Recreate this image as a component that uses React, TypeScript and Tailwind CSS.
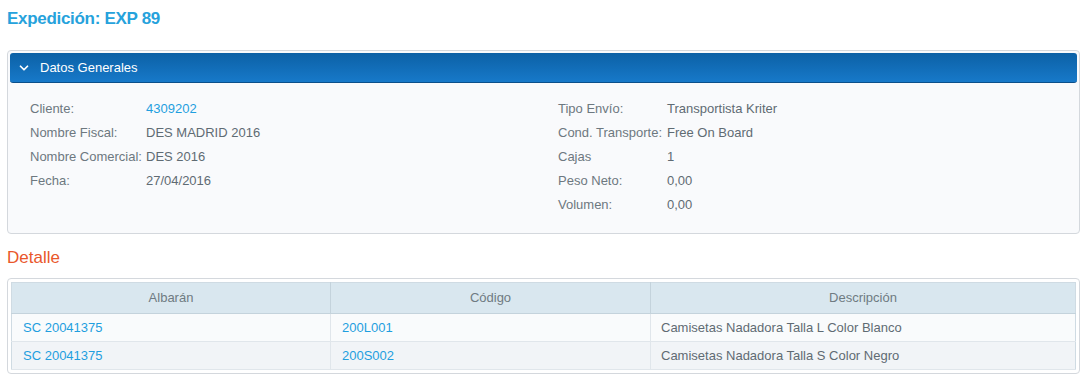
import { ChevronDown } from 'lucide-react'

const general = [
  { label: 'Cliente:', value: '4309202', link: true },
  { label: 'Nombre Fiscal:', value: 'DES MADRID 2016' },
  { label: 'Nombre Comercial:', value: 'DES 2016' },
  { label: 'Fecha:', value: '27/04/2016' },
]

const transport = [
  { label: 'Tipo Envío:', value: 'Transportista Kriter' },
  { label: 'Cond. Transporte:', value: 'Free On Board' },
  { label: 'Cajas', value: '1' },
  { label: 'Peso Neto:', value: '0,00' },
  { label: 'Volumen:', value: '0,00' },
]

const lines = [
  { albaran: 'SC 20041375', codigo: '200L001', desc: 'Camisetas Nadadora Talla L Color Blanco' },
  { albaran: 'SC 20041375', codigo: '200S002', desc: 'Camisetas Nadadora Talla S Color Negro' },
]

type Field = { label: string; value: string; link?: boolean }

const FieldList = ({ items, labelWidth }: { items: Field[]; labelWidth: string }) => (
  <div className="flex flex-col">
    {items.map((f) => (
      <div key={f.label} className="flex h-6 items-center">
        <span className={`${labelWidth} shrink-0 text-[#6d7880]`}>{f.label}</span>
        <span className={f.link ? 'text-[#1f9fdf]' : 'text-[#5f6b73]'}>{f.value}</span>
      </div>
    ))}
  </div>
)

export default function App() {
  return (
    <div className="min-h-[378px] bg-white pl-[7px] pr-[4px] pt-[7px] text-[13px] font-['Liberation_Sans',sans-serif]">
      <h1 className="text-[17px] font-bold leading-6 tracking-[-0.3px] text-[#26a2dc]">Expedición: EXP 89</h1>

      <section className="mt-[19px] rounded-[4px] border border-[#d4d8dd] bg-[#f9fafc] p-[2px]">
        <div className="flex h-[30px] items-center gap-[9px] rounded-[3px] border-b border-[#0b4f8a] bg-gradient-to-b from-[#0c61a6] to-[#1779c9] pl-[7px] text-white">
          <ChevronDown size={14} strokeWidth={3} />
          <span>Datos Generales</span>
        </div>
        <div className="flex pt-[14px] pb-[14px] pl-[20px]">
          <div className="w-[528px]">
            <FieldList items={general} labelWidth="w-[116px]" />
          </div>
          <FieldList items={transport} labelWidth="w-[109px]" />
        </div>
      </section>

      <h2 className="mt-[12px] text-[17px] leading-6 text-[#e9572b]">Detalle</h2>

      <section className="mt-[8px] rounded-[4px] border border-[#d4d8dd] bg-white p-[3px]">
        <table className="w-full border-collapse border border-[#cfdbe3]">
          <thead>
            <tr className="h-[31px] bg-[#d9e7ef] text-[#6f7b82]">
              <th className="w-[319px] border-r border-b border-[#c4d3dc] font-normal">Albarán</th>
              <th className="w-[320px] border-r border-b border-[#c4d3dc] font-normal">Código</th>
              <th className="border-b border-[#c4d3dc] font-normal">Descripción</th>
            </tr>
          </thead>
          <tbody>
            {lines.map((l, i) => (
              <tr key={l.codigo} className={i % 2 === 0 ? 'h-[28px] bg-[#f9fbfc]' : 'h-[28px] bg-[#f1f4f7]'}>
                <td className="border-r border-b border-[#e0e6eb] pl-[11px] text-[#1f9fdf]">{l.albaran}</td>
                <td className="border-r border-b border-[#e0e6eb] pl-[11px] text-[#1f9fdf]">{l.codigo}</td>
                <td className="border-b border-[#e0e6eb] pl-[10px] text-[#5f6b73]">{l.desc}</td>
              </tr>
            ))}
          </tbody>
        </table>
      </section>
    </div>
  )
}
